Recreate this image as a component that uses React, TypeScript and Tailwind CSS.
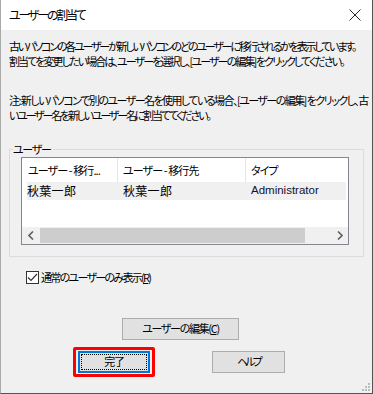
import React from 'react';

const jp = { fontFamily: '"Noto Sans CJK JP", "Noto Sans", sans-serif' };

const App: React.FC = () => {
  return (
    <div
      className="w-[373px] h-[394px] flex flex-col bg-[#f0f0f0] border-l border-r border-b border-l-[#aaaaaa] border-r-[#555555] border-b-[#555555] text-black text-[11px] tracking-[-1.3px] [font-feature-settings:'palt'] relative overflow-hidden"
      style={jp}
    >
      {/* Title bar */}
      <div className="h-[30px] bg-white flex items-center justify-between pl-[8px] pr-[10px] shrink-0">
        <span className="text-[12px] tracking-[-2.2px]">ユーザーの割当て</span>
        <svg width="12" height="12" viewBox="0 0 12 12" className="mr-[1px]">
          <path d="M0.5 0.5 L11.5 11.5 M11.5 0.5 L0.5 11.5" stroke="#222" strokeWidth="1" fill="none" />
        </svg>
      </div>

      {/* Description */}
      <div className="pl-[8px] pt-[9px] leading-[15px] whitespace-nowrap">
        <p className="tracking-[-2.2px]">古いパソコンの各ユーザーが新しいパソコンのどのユーザーに移行されるかを表示しています。</p>
        <p className="tracking-[-1.9px]">割当てを変更したい場合は、ユーザーを選択し、[ユーザーの編集] をクリックしてください。</p>
        <p className="mt-[24px] tracking-[-1.55px]">注: 新しいパソコンで別のユーザー名を使用している場合、[ユーザーの編集] をクリックし、古</p>
        <p className="tracking-[-2.2px]">いユーザー名を新しいユーザー名に割当ててください。</p>
      </div>

      {/* Group box */}
      <fieldset className="ml-[8px] mt-[19px] w-[355px] h-[115px] border border-[#dcdcdc] px-[11px] pt-[1px]">
        <legend className="ml-[-8px] pr-[2px] leading-[14px]">ユーザー</legend>
        <div className="w-[328px] h-[88px] bg-white border border-[#828790] flex flex-col">
          <div className="h-[24px] flex items-center shrink-0 tracking-[-0.9px]">
            <div className="w-[96px] h-full pl-[6px] flex items-center border-r border-[#e5e5e5]">ユーザー - 移行...</div>
            <div className="w-[128px] h-full pl-[5px] flex items-center border-r border-[#e5e5e5]">ユーザー - 移行先</div>
            <div className="pl-[5px] flex items-center">タイプ</div>
          </div>
          <div className="h-[18px] ml-[5px] mr-[2px] bg-[#f0f0f0] flex items-center shrink-0">
            <div className="w-[96px] text-[12px] tracking-[0.3px]">秋葉一郎</div>
            <div className="w-[128px] text-[12px] tracking-[0.3px]">秋葉一郎</div>
            <div
              className="text-[11.5px] tracking-normal text-[#111133] [font-feature-settings:normal]"
              style={{ fontFamily: '"Liberation Sans", Arial, sans-serif' }}
            >
              Administrator
            </div>
          </div>
          <div className="flex-1" />
          <div className="h-[17px] flex items-stretch bg-[#f0f0f0] shrink-0">
            <div className="w-[17px] flex items-center justify-center">
              <svg width="6" height="9" viewBox="0 0 6 9">
                <path d="M5 0.5 L1 4.5 L5 8.5" stroke="#606060" strokeWidth="1.6" fill="none" />
              </svg>
            </div>
            <div className="flex-1 flex items-center">
              <div className="ml-[1px] w-[265px] h-[15px] bg-[#cdcdcd]" />
            </div>
            <div className="w-[17px] flex items-center justify-center">
              <svg width="6" height="9" viewBox="0 0 6 9">
                <path d="M1 0.5 L5 4.5 L1 8.5" stroke="#606060" strokeWidth="1.6" fill="none" />
              </svg>
            </div>
          </div>
        </div>
      </fieldset>

      {/* Checkbox */}
      <label className="ml-[25px] mt-[12px] flex items-center gap-[2px] tracking-[-1.7px]">
        <span className="w-[13px] h-[13px] bg-white border border-[#333333] flex items-center justify-center">
          <svg width="11" height="9" viewBox="0 0 11 9">
            <path d="M1 4.5 L4 7.5 L10 1" stroke="#333" strokeWidth="1.2" fill="none" />
          </svg>
        </span>
        <span>
          通常のユーザーのみ表示(<span className="underline">R</span>)
        </span>
      </label>

      {/* Edit button */}
      <div className="ml-[121px] mt-[32px]">
        <button className="w-[117px] h-[22px] bg-[#e1e1e1] border border-[#adadad] flex items-center justify-center">
          ユーザーの編集(<span className="underline">C</span>)
        </button>
      </div>

      {/* Bottom buttons */}
      <div className="flex items-center mt-[7px] ml-[72px]">
        <div className="w-[82px] h-[30px] border-[3px] border-[#ff0000] rounded-[2px] flex items-center justify-center">
          <button className="w-[72px] h-[22px] bg-[#e1e1e1] border-2 border-[#0078d7] flex items-center justify-center">
            <span className="w-[66px] h-[16px] border border-dotted border-black flex items-center justify-center">完了</span>
          </button>
        </div>
        <button className="ml-[57px] w-[73px] h-[22px] bg-[#e1e1e1] border border-[#adadad] flex items-center justify-center tracking-[-3px]">
          ヘルプ
        </button>
      </div>

      {/* Resize grip */}
      <svg width="9" height="9" viewBox="0 0 9 9" className="absolute right-[2px] bottom-[2px]">
        {[[7, 1], [4, 4], [7, 4], [1, 7], [4, 7], [7, 7]].map(([x, y], i) => (
          <rect key={i} x={x} y={y} width="2" height="2" fill="#bcbcbc" />
        ))}
      </svg>
    </div>
  );
};

export default App;
